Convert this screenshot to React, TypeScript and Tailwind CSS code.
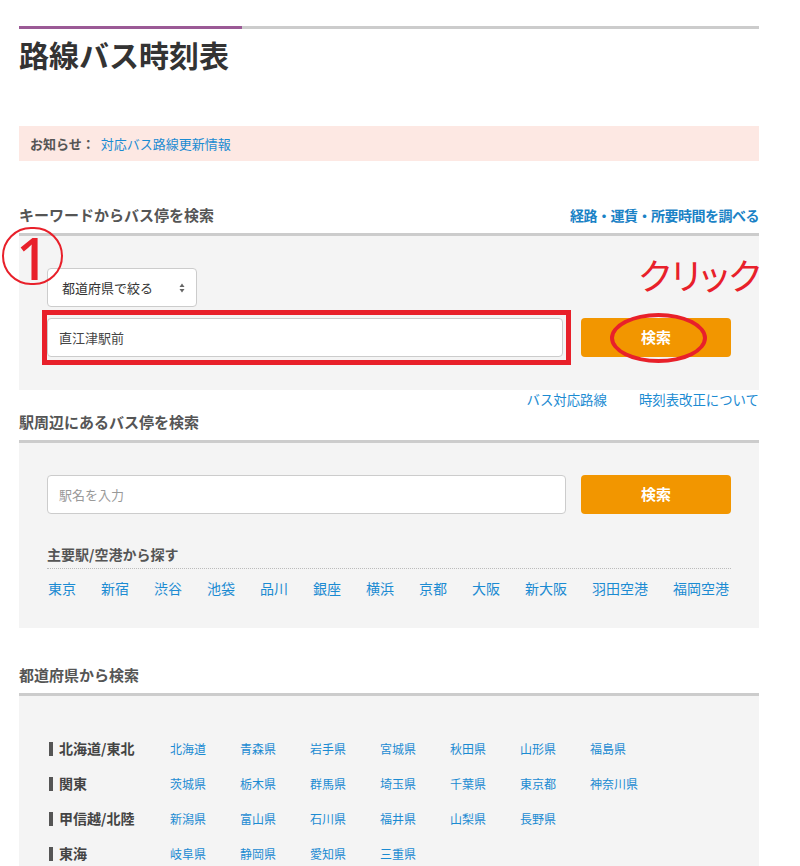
import React from "react";

const regions: { name: string; prefs: string[] }[] = [
  { name: "北海道/東北", prefs: ["北海道", "青森県", "岩手県", "宮城県", "秋田県", "山形県", "福島県"] },
  { name: "関東", prefs: ["茨城県", "栃木県", "群馬県", "埼玉県", "千葉県", "東京都", "神奈川県"] },
  { name: "甲信越/北陸", prefs: ["新潟県", "富山県", "石川県", "福井県", "山梨県", "長野県"] },
  { name: "東海", prefs: ["岐阜県", "静岡県", "愛知県", "三重県"] },
];

const stations = ["東京", "新宿", "渋谷", "池袋", "品川", "銀座", "横浜", "京都", "大阪", "新大阪", "羽田空港", "福岡空港"];

function SelectArrows() {
  return (
    <svg width="6" height="10" viewBox="0 0 6 10" className="block">
      <path d="M3 0.5 L5.5 4 L0.5 4 Z" fill="#666" />
      <path d="M3 9.5 L5.5 6 L0.5 6 Z" fill="#666" />
    </svg>
  );
}

function SectionHeading({ title, right }: { title: string; right?: React.ReactNode }) {
  return (
    <div className="flex items-center justify-between h-[20px] mb-[8px]">
      <h2 className="text-[15px] leading-[20px] font-bold text-[#555]">{title}</h2>
      {right}
    </div>
  );
}

export default function App() {
  return (
    <div className="w-[800px] min-h-[866px] bg-white font-['Noto_Sans_CJK_JP','Noto_Sans',sans-serif] overflow-hidden">
      <div className="relative ml-[19px] w-[740px] pt-[26px]">
        {/* top bar */}
        <div className="flex h-[3px]">
          <div className="w-[223px] bg-[#9b5a96]" />
          <div className="flex-1 bg-[#cccccc]" />
        </div>

        <h1 className="mt-[4px] text-[30px] leading-[42px] font-bold text-[#333]">路線バス時刻表</h1>

        {/* notice */}
        <div className="mt-[51px] h-[35px] bg-[#fde8e3] flex items-center pl-[11px] text-[13px]">
          <span className="font-bold text-[#555]">お知らせ：</span>
          <span className="ml-[6px] text-[#1b8bd2]">対応バス路線更新情報</span>
        </div>

        {/* keyword search */}
        <div className="mt-[44px]">
          <SectionHeading
            title="キーワードからバス停を検索"
            right={<span className="text-[14px] leading-[20px] font-bold text-[#1a82c6] tracking-[-0.5px]">経路・運賃・所要時間を調べる</span>}
          />
          <div className="border-t-[3px] border-[#cccccc] bg-[#f4f4f4] px-[28px] pt-[32px] pb-[33px]">
            <div className="w-[150px] h-[39px] bg-white border border-[#cccccc] rounded-[4px] flex items-center justify-between pl-[14px] pr-[11px]">
              <span className="text-[13px] text-[#333]">都道府県で絞る</span>
              <SelectArrows />
            </div>
            <div className="mt-[11px] flex gap-[18px]">
              <div className="w-[516px] h-[39px] bg-white border border-[#cccccc] rounded-[4px] flex items-center pl-[11px] text-[13px] text-[#444]">
                直江津駅前
              </div>
              <div className="w-[150px] h-[39px] bg-[#f29600] rounded-[4px] flex items-center justify-center text-white font-bold text-[15px]">
                検索
              </div>
            </div>
          </div>
          <div className="flex justify-end gap-[32px] text-[13.4px] leading-[18px] text-[#1b8bd2]">
            <span>バス対応路線</span>
            <span>時刻表改正について</span>
          </div>
        </div>

        {/* station search */}
        <div className="mt-[4px]">
          <SectionHeading title="駅周辺にあるバス停を検索" />
          <div className="border-t-[3px] border-[#cccccc] bg-[#f4f4f4] px-[28px] pt-[32px] pb-[30px]">
            <div className="flex gap-[15px]">
              <div className="w-[519px] h-[39px] bg-white border border-[#cccccc] rounded-[4px] flex items-center pl-[11px] text-[13px] text-[#999]">
                駅名を入力
              </div>
              <div className="w-[150px] h-[39px] bg-[#f29600] rounded-[4px] flex items-center justify-center text-white font-bold text-[15px]">
                検索
              </div>
            </div>
            <div className="mt-[30px] pb-[4px] border-b border-dotted border-[#bbbbbb]">
              <h3 className="text-[14px] leading-[20px] font-bold text-[#555]">主要駅/空港から探す</h3>
            </div>
            <div className="mt-[9px] pl-[1px] flex gap-[25px] text-[14px] leading-[20px] text-[#1b8bd2]">
              {stations.map((s) => (
                <span key={s}>{s}</span>
              ))}
            </div>
          </div>
        </div>

        {/* prefecture search */}
        <div className="mt-[37px]">
          <SectionHeading title="都道府県から検索" />
          <div className="border-t-[3px] border-[#cccccc] bg-[#f4f4f4] px-[28px] pt-[35px] pb-[20px]">
            {regions.map((r) => (
              <div key={r.name} className="flex items-center h-[35px]">
                <div className="w-[123px] flex items-center">
                  <div className="ml-[2px] w-[4px] h-[14px] bg-[#555]" />
                  <span className="ml-[6px] text-[14px] font-bold text-[#444]">{r.name}</span>
                </div>
                {r.prefs.map((p) => (
                  <span key={p} className="w-[70px] text-[12px] text-[#1b8bd2]">{p}</span>
                ))}
              </div>
            ))}
          </div>
        </div>

        {/* annotations */}
        <div className="absolute left-[-17px] top-[227px] w-[61px] h-[58px] rounded-full border-2 border-[#e8202a] flex items-center justify-center">
          <span className="font-['Noto_Sans',sans-serif] font-medium text-[58px] leading-none text-[#e8202a] mt-[4px]">1</span>
        </div>
        <div className="absolute right-[-2px] top-[254px] text-[36px] leading-[40px] text-[#e8202a] [font-feature-settings:'palt']">
          クリック
        </div>
        <div className="absolute left-[23px] top-[310px] w-[529px] h-[55px] border-[5px] border-[#e8202a]" />
        <div className="absolute left-[591px] top-[313px] w-[97px] h-[50px] rounded-[50%] border-[4px] border-[#e8202a]" />
      </div>
    </div>
  );
}
